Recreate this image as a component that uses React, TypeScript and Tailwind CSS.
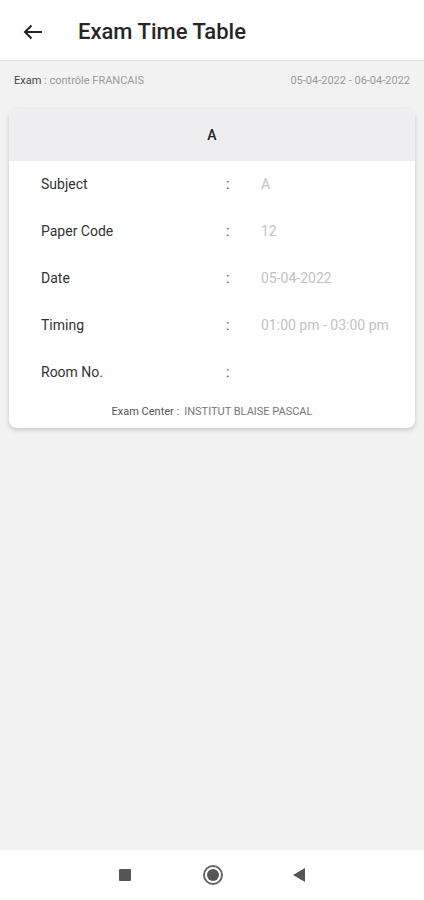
import React from "react";

type Row = { label: string; value: string };

const rows: Row[] = [
  { label: "Subject", value: "A" },
  { label: "Paper Code", value: "12" },
  { label: "Date", value: "05-04-2022" },
  { label: "Timing", value: "01:00 pm - 03:00 pm" },
  { label: "Room No.", value: "" },
];

export default function App() {
  return (
    <div
      className="w-[424px] h-[900px] flex flex-col bg-[#f2f2f2] text-[#222]"
      style={{ fontFamily: "Roboto, 'Noto Sans', sans-serif" }}
    >
      {/* App bar */}
      <div className="h-[61px] bg-white flex items-center pt-[3px] border-b border-[#e3e3e3]">
        <svg width="20" height="16" viewBox="0 0 20 16" className="ml-[23px]">
          <path d="M19 8H2M8.5 1.5 2 8l6.5 6.5" fill="none" stroke="#222" strokeWidth="2" />
        </svg>
        <h1 className="ml-[35px] text-[22px] font-medium text-[#262626]">Exam Time Table</h1>
      </div>

      {/* Exam info */}
      <div className="h-[40px] flex items-center justify-between px-[14px] text-[11px] text-[#9a9a9a]">
        <span>
          <span className="text-[#444]">Exam</span> : contrôle FRANCAIS
        </span>
        <span>05-04-2022 - 06-04-2022</span>
      </div>

      {/* Card */}
      <div className="mx-[9px] mt-[8px] bg-white rounded-lg shadow-[0_2px_5px_rgba(0,0,0,0.18)] overflow-hidden">
        <div className="h-[52px] bg-[#eeeef0] flex items-center justify-center text-[14px] font-medium text-[#222]">
          A
        </div>
        <div>
          {rows.map((row) => (
            <div key={row.label} className="h-[47px] flex items-center text-[14px]">
              <span className="w-[217px] pl-[32px] text-[#333]">{row.label}</span>
              <span className="w-[35px] text-[#444]">:</span>
              <span className="text-[#c2c2c2]">{row.value}</span>
            </div>
          ))}
        </div>
        <div className="h-[32px] flex items-start justify-center pt-[8px] text-[11px] text-[#777]">
          <span className="text-[#555]">Exam Center :</span>
          <span className="ml-[5px]">INSTITUT BLAISE PASCAL</span>
        </div>
      </div>

      <div className="flex-1" />

      {/* Nav bar */}
      <div className="h-[50px] bg-white flex items-center justify-center">
        <div className="w-[12px] h-[12px] bg-[#555] rounded-[1px] mr-[72px]" />
        <div className="w-[20px] h-[20px] rounded-full border-2 border-[#666] flex items-center justify-center mr-[70px]">
          <div className="w-[12px] h-[12px] rounded-full bg-[#555]" />
        </div>
        <svg width="12" height="14" viewBox="0 0 12 14">
          <path d="M12 0v14L0 7z" fill="#555" />
        </svg>
      </div>
    </div>
  );
}
